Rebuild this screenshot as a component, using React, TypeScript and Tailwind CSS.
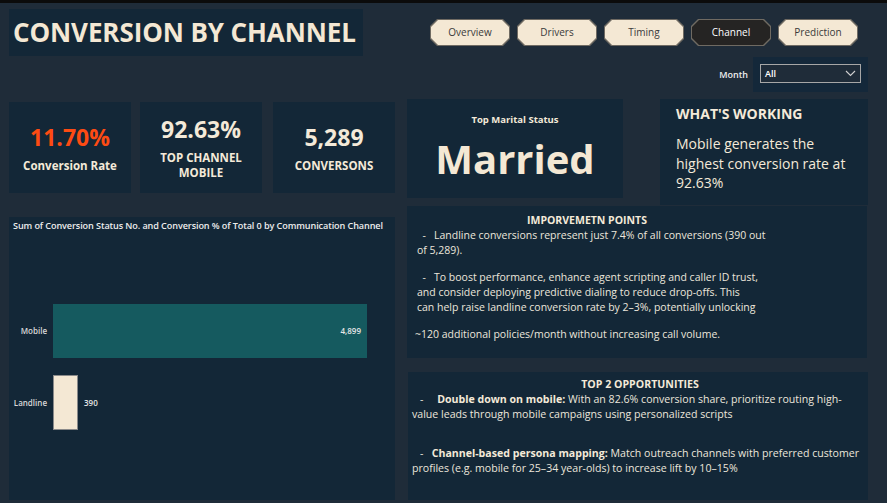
import React from "react";

const navItems = ["Overview", "Drivers", "Timing", "Channel", "Prediction"];

const NavButton = ({ label, active }: { label: string; active?: boolean }) => (
    <div className="w-[80px] h-[27px] p-px bg-[#6f6a62] [clip-path:polygon(7px_0,calc(100%_-_7px)_0,100%_7px,100%_calc(100%_-_7px),calc(100%_-_7px)_100%,7px_100%,0_calc(100%_-_7px),0_7px)]">
        <div
            className={`w-full h-full flex items-center justify-center text-[10px] [clip-path:polygon(7px_0,calc(100%_-_7px)_0,100%_7px,100%_calc(100%_-_7px),calc(100%_-_7px)_100%,7px_100%,0_calc(100%_-_7px),0_7px)] ${
                active ? "bg-[#252423] text-white" : "bg-[#f4e8d4] text-[#3a3a3a]"
            }`}
        >
            {label}
        </div>
    </div>
);

const Kpi = ({ value, label, orange, className }: { value: string; label: React.ReactNode; orange?: boolean; className?: string }) => (
    <div className={`w-[122px] h-[91px] bg-[#132737] flex flex-col items-center justify-center text-center ${className ?? ""}`}>
        <div className={`text-[23px] font-bold leading-[28px] ${orange ? "text-[#fd4b13]" : "text-[#f4ead9]"}`}>{value}</div>
        <div className="mt-[7px] text-[11.5px] font-bold leading-[15px] text-[#f4ead9]">{label}</div>
    </div>
);

export default function App() {
    return (
        <div className="w-[887px] h-[503px] box-border overflow-hidden border-t-[3px] border-[#0b0b0b] bg-[#1f2c39] font-['Open_Sans',sans-serif] text-[#f4ead9]">
            {/* header */}
            <div className="flex items-start h-[54px]">
                <div className="ml-[9px] mt-[6px] w-[354px] h-[47px] bg-[#132737] flex items-center pl-[4px]">
                    <h1 className="text-[26px] font-bold tracking-[-0.1px] text-[#f4e8d4]">CONVERSION BY CHANNEL</h1>
                </div>
                <div className="ml-[67px] mt-[16px] flex gap-[7px]">
                    {navItems.map((n) => (
                        <NavButton key={n} label={n} active={n === "Channel"} />
                    ))}
                </div>
            </div>

            {/* month slicer */}
            <div className="h-[35px] flex justify-end items-center pr-[19px]">
                <span className="mr-[5px] text-[9px] font-semibold text-[#eeeeee]">Month</span>
                <div className="w-[115px] h-[35px] bg-[#14283a] pt-[7px] pl-[7px]">
                    <div className="w-[101px] h-[19px] border border-[#a7a7a7] bg-[#1f2c39] flex items-center justify-between px-[4px]">
                        <span className="text-[9px] font-semibold text-white">All</span>
                        <svg width="11" height="7" viewBox="0 0 11 7" fill="none" stroke="#d0d0d0" strokeWidth="1.1">
                            <path d="M1 1l4.5 4.5L10 1" />
                        </svg>
                    </div>
                </div>
            </div>

            {/* body */}
            <div className="flex pl-[9px]">
                <div className="w-[386px] pt-[10px]">
                    <div className="flex">
                        <Kpi value="11.70%" label="Conversion Rate" orange />
                        <Kpi value="92.63%" label={<>TOP CHANNEL<br />MOBILE</>} className="ml-[9px]" />
                        <Kpi value="5,289" label="CONVERSONS" className="ml-[11px]" />
                    </div>

                    <div className="mt-[24px] h-[283px] bg-[#132737] pt-[2px] pl-[4px]">
                        <div className="text-[9.1px] font-semibold text-[#ececec] leading-[13px] tracking-[-0.1px] whitespace-nowrap">
                            Sum of Conversion Status No. and Conversion % of Total 0 by Communication Channel
                        </div>
                        <div className="mt-[72px] flex items-center h-[54px]">
                            <div className="w-[34px] text-right text-[8px] font-semibold text-[#d8d8d8]">Mobile</div>
                            <div className="ml-[6px] w-[314px] h-full bg-[#155a5f] flex items-center justify-end pr-[6px]">
                                <span className="text-[8px] font-semibold text-[#e6e6e6]">4,899</span>
                            </div>
                        </div>
                        <div className="mt-[17px] flex items-center h-[55px]">
                            <div className="w-[34px] text-right text-[8px] font-semibold text-[#d8d8d8]">Landline</div>
                            <div className="ml-[6px] w-[25px] h-full bg-[#f4e8d4] border border-[#8a8a8a]" />
                            <span className="ml-[6px] text-[8px] font-semibold text-[#e6e6e6]">390</span>
                        </div>
                    </div>
                </div>

                <div className="ml-[12px] w-[461px] pt-[7px]">
                    <div className="flex items-start">
                        <div className="w-[216px] h-[99px] bg-[#132737] flex flex-col items-center pt-[14px]">
                            <div className="text-[9.5px] font-bold text-[#f4ead9]">Top Marital Status</div>
                            <div className="mt-[6px] text-[40px] font-bold leading-[52px] text-[#f4e8d4]">Married</div>
                        </div>
                        <div className="ml-[37px] w-[208px] h-[106px] bg-[#132737] pl-[16px] pt-[5px]">
                            <div className="text-[14px] font-bold text-[#f4ead9] leading-[20px]">WHAT'S WORKING</div>
                            <div className="mt-[10px] text-[14px] leading-[19.5px] text-[#f4ead9]">
                                Mobile generates the<br />highest conversion rate at<br />92.63%
                            </div>
                        </div>
                    </div>

                    <div className="mt-[1px] w-[460px] h-[152px] bg-[#132737] pl-[10px] pt-[7px] text-[10.5px] leading-[15px] text-[#ece6dc]">
                        <div className="text-center font-bold pr-[110px] text-[#f4ead9]">IMPORVEMETN POINTS</div>
                        <div>&nbsp; -&nbsp;&nbsp; Landline conversions represent just 7.4% of all conversions (390 out</div>
                        <div>of 5,289).</div>
                        <div className="mt-[12px]">&nbsp; -&nbsp;&nbsp; To boost performance, enhance agent scripting and caller ID trust,</div>
                        <div>and consider deploying predictive dialing to reduce drop-offs. This</div>
                        <div>can help raise landline conversion rate by 2–3%, potentially unlocking</div>
                        <div className="mt-[12px] -ml-[2px]">~120 additional policies/month without increasing call volume.</div>
                    </div>

                    <div className="mt-[14px] ml-[1px] w-[460px] h-[128px] bg-[#132737] pl-[4px] pt-[5px] text-[10.6px] leading-[15px] text-[#ece6dc]">
                        <div className="text-center font-bold text-[#f4ead9]">TOP 2 OPPORTUNITIES</div>
                        <div className="pl-[8px]">
                            -&nbsp;&nbsp;&nbsp;&nbsp;&nbsp;<b className="text-[#f4ead9]">Double down on mobile:</b> With an 82.6% conversion share, prioritize routing high-
                        </div>
                        <div>value leads through mobile campaigns using personalized scripts</div>
                        <div className="mt-[24px] pl-[8px]">
                            -&nbsp;&nbsp; <b className="text-[#f4ead9]">Channel-based persona mapping:</b> Match outreach channels with preferred customer
                        </div>
                        <div>profiles (e.g. mobile for 25–34 year-olds) to increase lift by 10–15%</div>
                    </div>
                </div>
            </div>
        </div>
    );
}
